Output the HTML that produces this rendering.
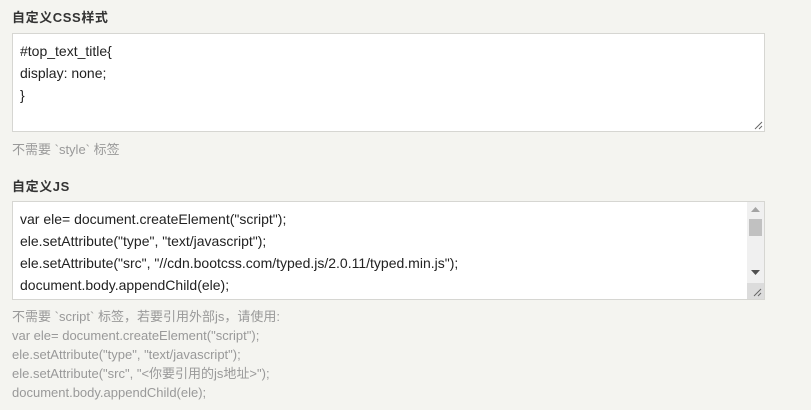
<!DOCTYPE html>
<html><head><meta charset="utf-8"><style>
body{margin:0;width:811px;height:410px;background:#f4f4f0;font-family:"Liberation Sans","Noto Sans CJK SC",sans-serif;position:relative;overflow:hidden}
.t{position:absolute;left:12px;font-size:13px;font-weight:bold;color:#333;letter-spacing:0.6px}
.box{position:absolute;left:12px;width:751px;height:97px;background:#fff;border:1px solid #d6d6d2;overflow:hidden}
.code{position:absolute;left:7px;top:6px;font-size:14px;line-height:22px;color:#222;white-space:pre}
.h{position:absolute;left:12px;font-size:13px;color:#999;line-height:19px}
.sb{position:absolute;right:0;top:0;width:17px;height:97px;background:#f0f0f0}
</style></head><body>
<div class="t" style="top:7px">自定义CSS样式</div>
<div class="box" style="top:33px">
<div class="code">#top_text_title{
display: none;
}</div>
<svg style="position:absolute;right:1px;bottom:1px" width="10" height="10"><path d="M9 2L2 9M9 6L6 9" stroke="#666" stroke-width="1"/></svg>
</div>
<div class="h" style="top:140px">不需要 `style` 标签</div>
<div class="t" style="top:176px">自定义JS</div>
<div class="box" style="top:201px">
<div class="code">var ele= document.createElement("script");
ele.setAttribute("type", "text/javascript");
ele.setAttribute("src", "//cdn.bootcss.com/typed.js/2.0.11/typed.min.js");
document.body.appendChild(ele);
window.onload=</div>
<div class="sb">
<svg style="position:absolute;left:4px;top:5px" width="9" height="5"><path d="M0 5L4.5 0L9 5Z" fill="#a3a3a3"/></svg>
<div style="position:absolute;left:2px;top:17px;width:13px;height:17px;background:#c1c1c1"></div>
<svg style="position:absolute;left:4px;top:68px" width="9" height="5"><path d="M0 0L4.5 5L9 0Z" fill="#505050"/></svg>
<div style="position:absolute;left:0;top:81px;width:17px;height:16px;background:#dcdcdc"></div>
<svg style="position:absolute;left:5px;top:85px" width="10" height="10"><path d="M9 2L2 9M9 6L6 9" stroke="#666" stroke-width="1"/></svg>
</div>
</div>
<div class="h" style="top:307px">不需要 `script` 标签，若要引用外部js，请使用:<br>var ele= document.createElement("script");<br>ele.setAttribute("type", "text/javascript");<br>ele.setAttribute("src", "&lt;你要引用的js地址&gt;");<br>document.body.appendChild(ele);</div>
</body></html>
